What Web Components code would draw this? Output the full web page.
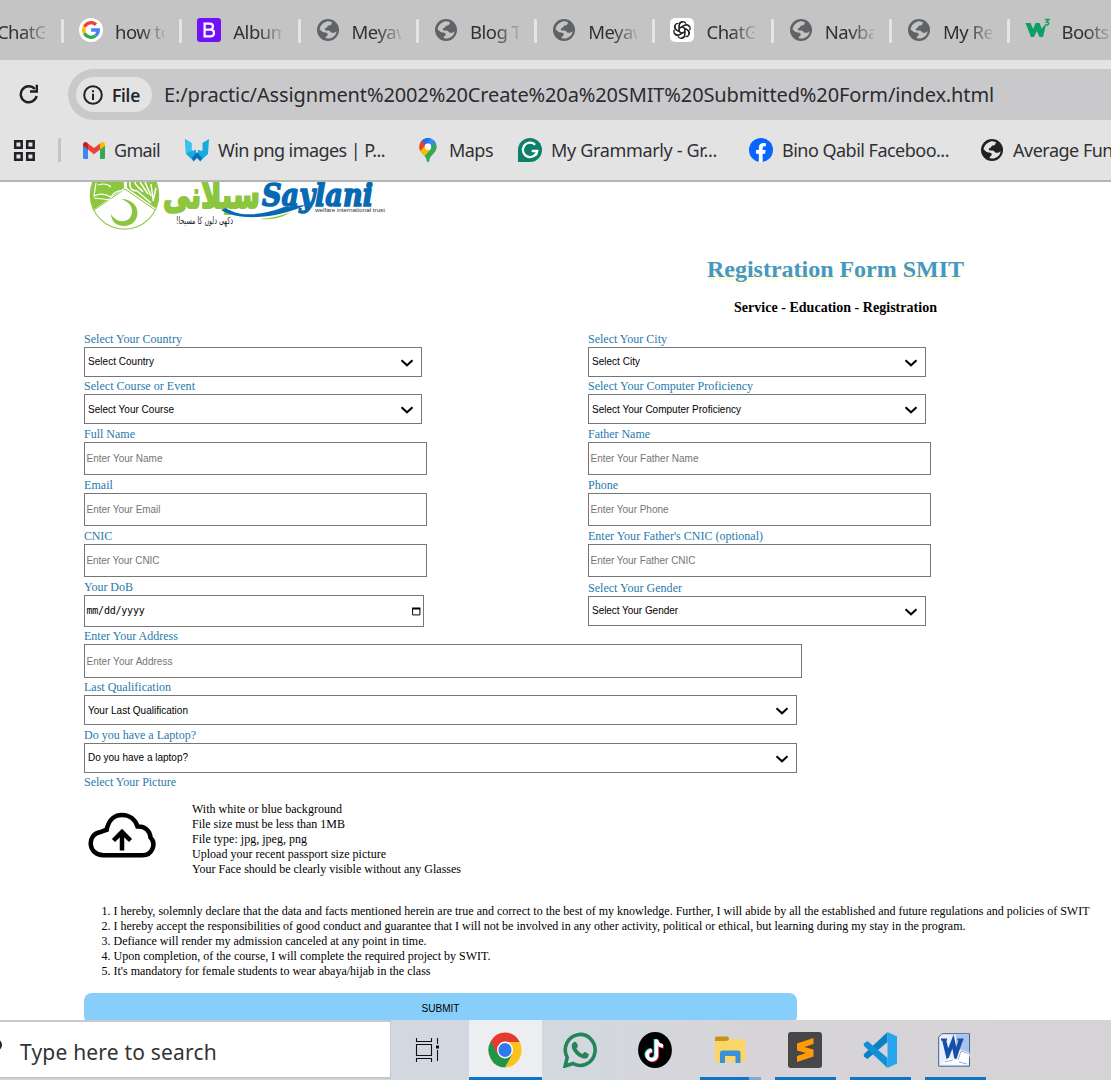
<!DOCTYPE html>
<html lang="en">
<head>
<meta charset="utf-8">
<title>Registration Form SMIT</title>
<style>
html,body{margin:0;padding:0;overflow:hidden;background:#fff}
body{font-family:"Liberation Serif",serif;color:#000}
</style>
</head>
<body>
<desktop-screen></desktop-screen>
<script>
const GLOBE = c => `<svg viewBox="0 0 24 24" width="22" height="22"><circle cx="12" cy="12" r="12" fill="${c}"/><path fill="var(--hole)" d="M10 3c1-.4 2-.5 3.200-.4 1.200 0 2.400.4 3.200.9L15.500 6c-.7 1.200-2.500 1-3.500 1.300-1 .4-.6 1.800-1.600 2.200-1 .5-1.900.6-1.900 1.700 0 1 1 1.300 2.200 1.300 1.800-.1 3.600.3 4.300 1.700.5 1.100 2 .8 3 .9 1.200.1 2.300-.9 3.400-1.800-.6 4.600-4.400 8-9.400 8L9.500 20.900c-.3-1.700 1-2 1.900-2.900.7-.8.3-2.500-1.100-2.900-2-.4-4.800-.4-5.600-2.300L2.800 11.500C3.200 7.500 6 4.300 10 3z"/></svg>`;
const ICONS = {
  globe: GLOBE('#5f6266'),
  darkglobe: GLOBE('#202124'),
  google: `<svg viewBox="0 0 24 24" width="24" height="24"><circle cx="12" cy="12" r="12" fill="#fff"/><g fill="none" stroke-width="3.300"><path stroke="#ea4335" d="M5.500 8.700A7.300 7.300 0 0 1 17 6.700"/><path stroke="#fbbc05" d="M5.500 15.300a7.300 7.300 0 0 1 0-6.600"/><path stroke="#34a853" d="M16.800 17.500A7.300 7.300 0 0 1 5.500 15.300"/><path stroke="#4285f4" d="M12.200 12h7.100a7.300 7.300 0 0 1-2.500 5.500"/></g></svg>`,
  boot: `<svg viewBox="0 0 24 24" width="24" height="24"><rect width="24" height="24" rx="3" fill="#7210f8"/><path fill="none" stroke="#fff" stroke-width="2.200" d="M7.600 5.600h5.200c4.200 0 4.200 6 0 6H7.600zm0 6h5.800c4.800 0 4.800 6.700 0 6.700H7.600z"/></svg>`,
  gpt: `<svg viewBox="0 0 24 24" width="24" height="24"><rect width="24" height="24" rx="5" fill="#fff"/><g fill="none" stroke="#222" stroke-width="1.200">${[0,60,120,180,240,300].map(a=>`<path transform="rotate(${a} 12 12)" d="M9.200 13.600V7.300c0-4.200 5.300-4.900 6.800-1.600M9.200 10.300l4.700-2.700c2-1 4-.6 5.200 1"/>`).join('')}</g></svg>`,
  w3: `<svg viewBox="0 0 25 24" width="25" height="24"><path d="M.5 5h5l2.700 6L10.500 5h4l2.500 6 1.800-3.500h2L18 19h-3.500L11.800 13 9 19H6z" fill="#0aa063"/><path d="M19.800 1.600h4l-2.200 2.300c3.200 0 2.800 4-1.700 2.900" fill="none" stroke="#0aa063" stroke-width="1.500"/></svg>`,
  gmail: `<svg viewBox="0 0 22 17" width="22" height="17"><path fill="#4285f4" d="M0 3l5 3.500V17H1.500Q0 17 0 15.500z"/><path fill="#34a853" d="M22 3l-5 3.500V17h3.500q1.500 0 1.500-1.500z"/><path fill="#ea4335" d="M5 1.500l6 4.600 6-4.600v6l-6 4.700-6-4.700z"/><path fill="#c5221f" d="M0 2.500C0 0 2.500-.7 4.300.8L5 1.400v6L0 3.800z"/><path fill="#fbbc04" d="M22 2.500C22 0 19.500-.7 17.700.8l-.7.6v6l5-3.600z"/></svg>`,
  win: `<svg viewBox="0 0 24 24" width="24" height="24"><path fill="#18a9df" d="M0 1l6.500 4v8l4.500-2v8l-2.500 4L1 16z"/><path fill="#18a9df" d="M24 1l-6.500 4v8L13 11v8l2.500 4L23 16z"/><path fill="#e3e3e3" d="M8 5h8v8l-4-2-4 2z"/><path fill="#0870b5" d="M7 20l5-6 5 6-1.500 3.500L12 20l-3.500 3.500z"/><path fill="#36c3ee" d="M0 1l6.500 4v8L1 16z"/></svg>`,
  maps: `<svg viewBox="0 0 18 24" width="18" height="24"><defs><clipPath id="p"><path d="M9 0a8.700 8.700 0 0 1 8.700 8.700c0 6.300-7 8-7.500 14.300 0 1.300-2.400 1.300-2.400 0C7.300 16.700.3 15 .3 8.700A8.700 8.700 0 0 1 9 0z"/></clipPath></defs><g clip-path="url(#p)"><path fill="#34a853" d="M0 0h18v24H0z"/><path fill="#fbbc04" d="M0 12l6-6 6 5-8 9z"/><path fill="#4285f4" d="M5 0h13v3L11 11 3 5z"/><path fill="#1a73e8" d="M2 2l6-3 4 1-6 7z"/><path fill="#ea4335" d="M0 2l2.500.5L7 6.500l-5.500 6.500H0z"/></g><circle cx="9" cy="8.700" r="3.200" fill="#fff"/></svg>`,
  gram: `<svg viewBox="0 0 24 24" width="24" height="24"><path fill="#0b806a" d="M12 0a12 12 0 1 1 0 24H0V12A12 12 0 0 1 12 0z"/><path d="M17.200 6.800a7.200 7.200 0 1 0 2 6.200h-5.500m5.500-.2l-1.200 4.500" fill="none" stroke="#fff" stroke-width="2.300"/></svg>`,
  fb: `<svg viewBox="0 0 24 24" width="24" height="24"><circle cx="12" cy="12" r="12" fill="#0866ff"/><path fill="#fff" d="M9.800 24v-8.300H7v-3.600h2.800V10c0-4 2.300-5.500 7-4.800v3.200c-2.400-.2-3.200.2-3.200 2v1.700h3.100l-.6 3.600h-2.500V24z"/></svg>`,
  apps: `<svg viewBox="0 0 23 23" width="23" height="23" fill="none" stroke="#202124" stroke-width="2.500"><path d="M2.200 2.200h6.500v6.500H2.200zM14.200 2.200h6.500v6.500h-6.500zM2.200 14.200h6.500v6.500H2.200zM14.200 14.200h6.500v6.500h-6.500z"/></svg>`,
  reload: `<svg viewBox="0 0 20 20" width="20" height="20"><path d="M15.800 5A8 8 0 1 0 17.600 12" fill="none" stroke="#202124" stroke-width="2.400"/><path fill="#202124" d="M19 .7v8h-8V6.300h5.600V.7z"/></svg>`,
  info: `<svg viewBox="0 0 20 20" width="20" height="20"><circle cx="10" cy="10" r="8.800" fill="none" stroke="#202124" stroke-width="2"/><path fill="#202124" d="M9 8.700h2V15H9zM9 5.200h2v2.100H9z"/></svg>`,
  taskview: `<svg viewBox="0 0 25 24" width="25" height="24" fill="none" stroke="#111" stroke-width="1.100"><path d="M1.500 0v3.500h15V0M1.500 24v-3.500h15V24M1.500 6.500h15v11h-15zM22.500 0v6M22.500 12v11"/><path stroke-width="3" d="M22.500 7.500v3"/></svg>`,
  chrome: `<svg viewBox="0 0 34 36" width="34" height="36" preserveAspectRatio="none"><g transform="translate(.5 .5) scale(1 1.060)"><path fill="#e53b2f" d="M16.500 16.500L2.200 8.200a16.500 16.500 0 0 1 28.600 0z"/><path fill="#fcc31e" d="M16.500 9h14.800a16.500 16.500 0 0 1-14.800 24l7-12.500z"/><path fill="#249547" d="M2.200 8.200A16.500 16.500 0 0 0 16.500 33l7-12-7-4.500z"/><path fill="#e53b2f" d="M2.200 8.200L9.200 20.300 16.500 9h14.700l-.6-1z"/><circle cx="16.500" cy="16.500" r="8" fill="#fff"/><circle cx="16.500" cy="16.500" r="6.600" fill="#2f78ee"/></g></svg>`,
  whats: `<svg viewBox="0 0 34 36" width="34" height="36"><path d="M2.200 34l2-8.500A14.900 15.500 0 1 1 10 31.500z" fill="none" stroke="#25855a" stroke-width="3.600"/><path fill="#25855a" d="M10.300 10.500c1.200-1.200 2.700-1 3.300.3l1.300 3c.3.900-1 2-1.400 2.700 1.300 2.700 3.400 4.400 6 5.500.9-.8 1.500-2.200 2.500-2l3.400 1.700c.8.5.3 3-1.200 4.200-4.300 3-14.500-4.200-15.500-11.200-.2-1.700.6-3.300 1.600-4.200z"/></svg>`,
  tiktok: `<svg viewBox="0 0 34 36" width="34" height="36"><ellipse cx="17" cy="18" rx="16.900" ry="18" fill="#000"/><g fill="none" stroke-width="3.600"><path stroke="#25e5df" d="M17.500 7v15.500a4.600 4.600 0 1 1-4.500-4.700M17.500 7c.4 3.500 3 6 6.500 6.200"/><path stroke="#f32858" d="M19.300 8.500V24a4.600 4.600 0 1 1-4.500-4.700M19.300 8.500c.4 3.500 3 6 6.500 6.200"/><path stroke="#fff" d="M18.400 7.700v15.500a4.600 4.600 0 1 1-4.500-4.700M18.400 7.700c.4 3.500 3 6 6.500 6.200"/></g></svg>`,
  folder: `<svg viewBox="0 0 32 28" width="32" height="28"><path fill="#c8911a" d="M1 2q0-1.500 1.500-1.500h11L15 2v3H1z"/><path fill="#fbd566" d="M1 5h12l2-1.800h15q1.500 0 1.500 1.500V26H1z"/><path fill="#3b91d8" d="M6 27V17q0-2.500 2.500-2.500h15.500q2.500 0 2.500 2.500v10h-5v-7H11v7z"/></svg>`,
  sublime: `<svg viewBox="0 0 34 36" width="34" height="36"><rect width="34" height="36" rx="3" fill="#474648"/><path fill="#ff9b06" d="M9 11.500L25.500 6v6L16.500 15l9 2.500v7L9 30v-6l9-3-9-2.500z"/></svg>`,
  vscode: `<svg viewBox="0 0 34 36" width="34" height="36"><path fill="#0d7fc4" d="M24.500 0v10L4.500 27 .8 24.500v-2.300z"/><path fill="#1190d6" d="M24.500 36V26L4.500 9 .8 11.500v2.300z"/><path fill="#29a5ed" d="M24.500 0l9.500 4.500v27L24.500 36z"/></svg>`,
  word: `<svg viewBox="0 0 33 34" width="33" height="34"><path fill="#e8f0fb" stroke="#426298" d="M4 .7h27.500v32.500H.7V4z"/><path fill="#a9c3ea" d="M18 1.500h13v18L18 15z"/><path fill="none" stroke="#174ea6" stroke-width="4" d="M6 6.500l3.700 15.500L15 8.500l2.700 13.500L23 6.500"/><path stroke="#174ea6" stroke-width="1.800" d="M3 6.500h6M19.500 6.500h6"/><path fill="#fff" d="M22 17l10 3-2 12-26-1 6-6 9 1z"/><path fill="none" stroke="#7f9bc8" stroke-width=".8" d="M20 27l3-9 9 3M21 29l8 2M7 29l8-2"/></svg>`,
  cloud: `<svg viewBox="0 0 68 47" width="68" height="47" fill="none" stroke="#000" stroke-width="4.500"><path d="M15.500 43.300C-.5 43.300-1.500 22 12.500 20c2-.3 3.500-1.800 6.200-2.300C20.500 8 26.500 3 34 3c8 0 13.500 5 15.500 11.500C57 14 62 19 62.500 25.500c6 6 2 17.800-8 17.800z"/><path d="M34 38.500V21M25.500 28.500L34 20l8.500 8.500"/></svg>`,
  chev: `<svg viewBox="0 0 14 8" width="14" height="8"><path d="M1.500 1.300L7 6.300l5.500-5" fill="none" stroke="#000" stroke-width="2"/></svg>`,
  cal: `<svg viewBox="0 0 9 9" width="9" height="9"><path d="M.6 1.500h7.300v6.400H.6z" fill="none" stroke="#000" stroke-width="1"/><path d="M.1.500h8.300v2H.1z"/></svg>`
};
const el = (name, css, html) => customElements.define(name, class extends HTMLElement {
  connectedCallback() {
    if (this.shadowRoot) return;
    this.attachShadow({mode: 'open'}).innerHTML = `<style>:host{box-sizing:border-box}${css}</style>` + (typeof html === 'function' ? html(this) : html);
  }
});

/* Desktop: browser window above the taskbar */
el('desktop-screen', `:host{display:flex;flex-direction:column;width:1111px;height:1080px;overflow:hidden}`,
  `<tab-strip></tab-strip><address-bar></address-bar><bookmark-bar></bookmark-bar><form-page></form-page><task-bar></task-bar>`);

const tabs = [['google','how to'],['boot','Album'],['globe','Meyaw'],['globe','Blog T'],['globe','Meyaw'],['gpt','ChatG'],['globe','Navba'],['globe','My Re'],['w3','Boots']];
el('tab-strip', `:host{display:flex;height:60px;flex:none;background:#c4c4c4;align-items:center;overflow:hidden}
  .first{width:61px;flex:none;display:flex;font:18.500px/28px "Noto Sans",sans-serif;color:#303134;letter-spacing:-.6px;margin-top:3px}
  .first span{width:48px;height:28px;margin-left:-3px;overflow:hidden;-webkit-mask:linear-gradient(90deg,#000 50%,#0003)}`,
  `<div class="first"><span>ChatG</span></div>` + tabs.map(t => `<browser-tab icon="${t[0]}">${t[1]}</browser-tab>`).join(''));
el('browser-tab', `:host{display:flex;align-items:center;flex:none;width:118.300px;height:60px;--hole:#c4c4c4}
  i{width:3px;height:24px;background:#e5e5e5;margin-right:15px;border-radius:1px;margin-top:2px}
  b{width:24px;height:24px;display:grid;place-items:center;margin-right:12px;flex:none}
  svg{display:block}
  span{width:49px;overflow:hidden;white-space:nowrap;font:18.500px/28px "Noto Sans",sans-serif;letter-spacing:-.5px;color:#303134;-webkit-mask:linear-gradient(90deg,#000 50%,#0002);margin-top:3px}`,
  h => `<i></i><b>${ICONS[h.getAttribute('icon')]}</b><span><slot></slot></span>`);

el('address-bar', `:host{display:flex;flex:none;height:60px;background:#e3e3e3;align-items:flex-start;padding:9px 0 0 19px;font-family:"Noto Sans",sans-serif;color:#202124}
  .r{margin:15px 29px 0 0;width:20px;height:20px;flex:none}
  svg{display:block}
  .pill{flex:1;height:51px;border-radius:26px 0 0 26px;background:#c9c9cb;display:flex;align-items:center;padding-left:8px}
  .chip{width:76px;height:35px;border-radius:18px;background:#e3e3e3;display:flex;align-items:center;padding-left:7px;box-sizing:border-box;gap:9px;font-size:17.500px;font-weight:500;line-height:30px;-webkit-text-stroke:.2px}
  .u{margin-left:12px;font-size:20px;line-height:30px;color:#2b2c2f}`,
  `<div class="r">${ICONS.reload}</div><div class="pill"><div class="chip">${ICONS.info}<fit-text w="28">File</fit-text></div><div class="u"><fit-text w="830">E:/practic/Assignment%2002%20Create%20a%20SMIT%20Submitted%20Form/index.html</fit-text></div></div>`);

const marks = [['gmail',22,22,9,46,'Gmail'],['win',25,24,9,167,'Win png images | P...'],['maps',34,18,12,44,'Maps'],['gram',25,24,9,166,'My Grammarly - Gr...'],['fb',32,24,9,167,'Bino Qabil Faceboo...'],['darkglobe',32,22,10,100,'Average Fun']];
el('bookmark-bar', `:host{display:flex;flex:none;height:62px;background:#e3e3e3;border-bottom:2px solid #b5b5b5;align-items:center;padding-left:13px;overflow:hidden;font:18px/28px "Noto Sans",sans-serif;color:#303134;--hole:#e3e3e3}
  svg{display:block;flex:none} i{width:3px;height:24px;background:#c4c4c4;margin-left:22px;border-radius:1px;flex:none}
  .m{display:flex;align-items:center;flex:none}`,
  ICONS.apps + '<i></i>' + marks.map(m => `<div class="m" style="margin-left:${m[1]}px;gap:${m[3]}px">${ICONS[m[0]]}<fit-text w="${m[4]}">${m[5]}</fit-text></div>`).join(''));

/* Charity logo, its top edge scrolled under the toolbar */
el('saylani-logo', `:host{display:block;height:50px}svg{display:block}`,
  `<svg width="320" height="50" viewBox="80 182 320 50">
  <defs><clipPath id="c"><circle cx="124.500" cy="195" r="34"/></clipPath></defs>
  <g clip-path="url(#c)"><path fill="#8cc63f" d="M88 160h35l1 28-31 22-9-15z"/><path fill="#8cc63f" d="M127 160h33v42l-5 6-28-20z"/></g>
  <circle cx="124.500" cy="195" r="34.200" fill="none" stroke="#8cc63f" stroke-width="1.100"/>
  <path fill="none" stroke="#8cc63f" stroke-width="1" d="M125 189l-31 21M125 189l30 21"/>
  <path fill="none" stroke="#fff" stroke-width="1.200" d="M96 183l-2 13c6-3 12-2 17 1 3-5 8-7 13-6M98 185c6-2 10-1 13 2M94 198l17 2 11-5"/>
  <path fill="none" stroke="#fff" stroke-width="1.500" d="M130 182c-1 7 3 9 7 9l14 12M135 182c0 4 5 6 8 10M140 182l8 12M145 182l6 14M151 184l2 15M156 188l-3 13"/>
  <path fill="#8cc63f" d="M121 199c22 0 21 27 3 27-8 0-13-5-13-12 5 10 21 10 21-3 0-6-5-10-11-12z"/>
  <text x="260" y="208" direction="rtl" textLength="97" lengthAdjust="spacingAndGlyphs" font-family="DejaVu Sans,sans-serif" font-weight="bold" font-size="38" fill="#8cc63f" stroke="#8cc63f" stroke-width="2.200">سیلانی</text>
  <text x="262" y="206" textLength="111" lengthAdjust="spacingAndGlyphs" font-family="DejaVu Serif,serif" font-weight="bold" font-style="italic" font-size="32" fill="#0869b3" stroke="#0869b3" stroke-width="1.600">Saylani</text>
  <path fill="#0869b3" d="M221 210l5-2c12 9 35 8 58-1l22-2c-27 13-66 17-85 5z"/>
  <path fill="#8cc63f" d="M260 219c13-1 19-3 31-7-8 5-16 8-31 7z"/>
  <text x="315" y="211.500" textLength="70" lengthAdjust="spacingAndGlyphs" font-family="Liberation Sans,sans-serif" font-size="6" fill="#333">welfare international trust</text>
  <text x="233" y="224" direction="rtl" textLength="57" lengthAdjust="spacingAndGlyphs" font-family="DejaVu Sans,sans-serif" font-size="10" fill="#222">دکھی دلوں کا مسیحا!</text></svg>`);

/* One labelled control: kind is select, input or date */
el('form-field', `:host{display:block;font-family:"Liberation Serif",serif}
  .l{height:16px;font-size:12px;line-height:16px;color:#2779ad}
  .b{box-sizing:border-box;border:1px solid #767676;display:flex;align-items:center;justify-content:space-between;font:10px/12px "Liberation Sans",sans-serif;padding:0 2px 0 1.500px;color:#757575}
  .select{color:#000;padding:0 7px 0 3px}.date{color:#000;font:10px/12px "DejaVu Sans Mono",monospace;padding-right:2px}
  .drop fit-text{margin-top:2px}
  svg{display:block}.select svg{margin-top:1px}`,
  h => { const g = k => h.getAttribute(k), k = g('kind');
    return `<div class="l"><fit-text w="${g('lw')}">${g('label')}</fit-text></div><div class="b ${k} ${h.hasAttribute('drop')?'drop':''}" style="width:${g('bw')}px;height:${g('bh')}px"><fit-text w="${g('tw')}">${g('text')}</fit-text>${k==='select'?ICONS.chev:k==='date'?ICONS.cal:''}</div>`; });

const F = (kind,label,lw,text,tw,bw,bh,x='') => `<form-field kind="${kind}" label="${label}" lw="${lw}" text="${text}" tw="${tw}" bw="${bw}" bh="${bh}" ${x}></form-field>`;
const rules = [['I hereby, solemnly declare that the data and facts mentioned herein are true and correct to the best of my knowledge. Further, I will abide by all the established and future regulations and policies of SWIT',976],['I hereby accept the responsibilities of good conduct and guarantee that I will not be involved in any other activity, political or ethical, but learning during my stay in the program.',852],['Defiance will render my admission canceled at any point in time.',313],['Upon completion, of the course, I will complete the required project by SWIT.',377],["It's mandatory for female students to wear abaya/hijab in the class",317]];
const notes = [['With white or blue background',150],['File size must be less than 1MB',153],['File type: jpg, jpeg, png',115],['Upload your recent passport size picture',194],['Your Face should be clearly visible without any Glasses',269]];
el('form-page', `:host{display:flex;flex-direction:column;height:838px;flex:none;overflow:hidden;background:#fff;padding-left:84px;font-family:"Liberation Serif",serif}
  saylani-logo{margin-left:-4px;flex:none}
  .head{width:257px;margin-left:623px;display:flex;flex-direction:column;align-items:center;flex:none;height:99px}
  h1{margin:22px 0 0;font-size:24px;line-height:30px;color:#4398c8;text-shadow:0 3px 2px #fbf8c4}
  h2{margin:15px 0 0;font-size:14px;line-height:18px}
  .grid{display:grid;grid-template-columns:504px 1fr;grid-template-rows:47px 48px 51px 51px 51px 49px 51px 48px 47px;flex:none}
  .wide{grid-column:1/3}.low{margin-top:1px}
  .pic{font-size:12px;line-height:16px;color:#2779ad;flex:none}
  .up{display:flex;margin-top:12px;flex:none;height:75px;font-size:12px;line-height:15px}
  .up svg{margin:10px 36px 0 4px}.up fit-text{display:block}
  ol{list-style:none;margin:27px 0 0;padding:0 0 0 17.500px;font-size:12px;line-height:15px;flex:none}
  li{display:flex}li span{width:12px}
  button{display:flex;align-items:center;justify-content:center;margin:14px 0 0;width:713px;height:31px;flex:none;border:0;border-radius:8px;background:#87cefa;font:10px/12px "Liberation Sans",sans-serif;color:#000;padding:0}`,
  `<saylani-logo></saylani-logo><div class="head"><h1><fit-text w="257">Registration Form SMIT</fit-text></h1><h2><fit-text w="203">Service - Education - Registration</fit-text></h2></div>
  <div class="grid">` +
  F('select','Select Your Country',98,'Select Country',66,338,30) + F('select','Select Your City',79,'Select City',48,338,30) +
  F('select','Select Course or Event',111,'Select Your Course',86,338,30,'drop') + F('select','Select Your Computer Proficiency',165,'Select Your Computer Proficiency',149,338,30,'drop') +
  F('input','Full Name',51,'Enter Your Name',76,343,33) + F('input','Father Name',62,'Enter Your Father Name',108,343,33) +
  F('input','Email',29,'Enter Your Email',74,343,33) + F('input','Phone',30,'Enter Your Phone',78,343,33) +
  F('input','CNIC',28,'Enter Your CNIC',73,343,33) + F('input',"Enter Your Father's CNIC (optional)",175,'Enter Your Father CNIC',105,343,33) +
  F('date','Your DoB',49,'mm/dd/yyyy',58,340,32) + F('select','Select Your Gender',94,'Select Your Gender',86,338,30,'class="low"') +
  F('input','Enter Your Address',94,'Enter Your Address',86,718,34,'class="wide" drop') +
  F('select','Last Qualification',87,'Your Last Qualification',100,713,30,'class="wide" drop') +
  F('select','Do you have a Laptop?',112,'Do you have a laptop?',100,713,30,'class="wide"') +
  `</div><div class="pic"><fit-text w="92">Select Your Picture</fit-text></div>
  <div class="up">${ICONS.cloud}<div>${notes.map(n=>`<fit-text w="${n[1]}">${n[0]}</fit-text>`).join('')}</div></div>
  <ol>${rules.map((r,i)=>`<li><span>${i+1}.</span><fit-text w="${r[1]}">${r[0]}</fit-text></li>`).join('')}</ol>
  <button><fit-text w="38">SUBMIT</fit-text></button>`);

const apps = ['chrome','whats','tiktok','folder','sublime','vscode','word'];
el('task-bar', `:host{display:flex;height:60px;flex:none;background:linear-gradient(90deg,#d3d7e0 35%,#d3d8df 52%,#d7d4d7 68%,#d5d3d5)}
  .s{width:391px;height:59px;box-sizing:border-box;background:#fff;border:solid #c8c8c8;border-width:2px 1px 2px 0;display:flex;align-items:center;font:21px/30px "Noto Sans",sans-serif;color:#333;padding-top:4px}
  .s svg{margin:-14px 17px 0 0;display:block}
  .v{width:76.500px;display:grid;place-items:center;padding-right:3px;box-sizing:border-box}svg{display:block}`,
  `<div class="s"><svg width="3" height="12" viewBox="0 0 3 12"><circle cx="-4" cy="6" r="5" fill="none" stroke="#222" stroke-width="2"/></svg><fit-text w="197">Type here to search</fit-text></div><div class="v">${ICONS.taskview}</div>` +
  apps.map((a,i) => `<task-app icon="${a}" state="${i===0?'on':i===3?'multi':i>3?'open':''}"></task-app>`).join(''));
el('task-app', `:host{display:flex;flex-direction:column;align-items:center;justify-content:space-between;width:75px;height:60px;flex:none}
  .i{height:57px;display:grid;place-items:center;padding-top:3px;box-sizing:border-box;width:73px}svg{display:block;margin-left:-1px}
  u{display:block;height:3px;width:61px}.open{background:#1075c7}.multi{background:linear-gradient(90deg,#1075c7 49px,#7eaad4 49px)}.on{width:73px;background:#1075c7}
  :host([state=on]) .i{background:#eceef1}`,
  h => `<div class="i">${ICONS[h.getAttribute('icon')]}</div><u class="${h.getAttribute('state')}"></u>`);

/* Single line of text tracked to an exact width */
customElements.define('fit-text', class extends HTMLElement {
  connectedCallback() {
    if (this.shadowRoot) return;
    this.attachShadow({mode: 'open'}).innerHTML = `<style>:host{display:block;flex:none;white-space:nowrap;text-align:left}span{display:inline-block}</style><span><slot></slot></span>`;
    const s = this.shadowRoot.querySelector('span'), w = +this.getAttribute('w');
    this.style.width = w + 'px';
    const n = this.textContent.length;
    s.style.letterSpacing = ((w - s.getBoundingClientRect().width) / n).toFixed(4) + 'px';
  }
});
</script>
</body>
</html>
